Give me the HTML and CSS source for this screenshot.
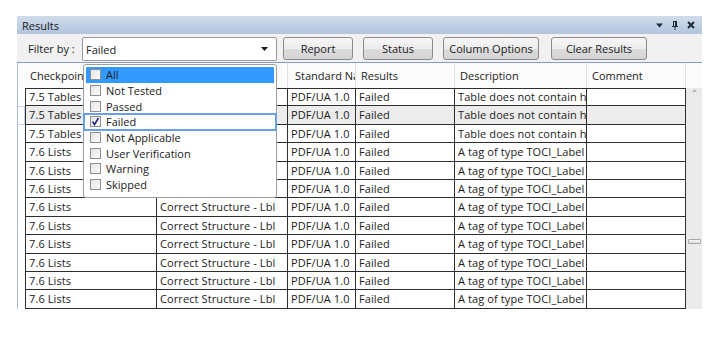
FILE: index.html
```html
<!DOCTYPE html>
<html>
<head>
<meta charset="utf-8">
<link rel="stylesheet" href="styles.css">
</head>
<body>
<div class="panel">
  <div class="titlebar">
    <span class="title">Results</span>
    <div class="title-icons">
      <svg width="7" height="5" viewBox="0 0 7 5"><path d="M0 0.5H7L3.5 4.5Z" fill="#1e2a3a"/></svg>
      <svg width="6" height="9" viewBox="0 0 6 9"><path d="M1 0.5H5M1.5 0.5V5.5M4.5 0.5V5.5M0 5.5H6M3 5.5V9" stroke="#1e2a3a" stroke-width="1" fill="none"/><rect x="3" y="1" width="1.5" height="4.5" fill="#1e2a3a"/></svg>
      <svg width="8" height="8" viewBox="0 0 8 8"><path d="M1 1L7 7M7 1L1 7" stroke="#1e2a3a" stroke-width="2"/></svg>
    </div>
  </div>
  <div class="toolbar">
    <span class="filter-label">Filter by :</span>
    <div class="combo">
      <span>Failed</span>
      <svg width="7" height="4" viewBox="0 0 7 4"><path d="M0 0H7L3.5 4Z" fill="#1b1b1b"/></svg>
    </div>
    <button class="btn btn-report">Report</button>
    <button class="btn btn-status">Status</button>
    <button class="btn btn-columns">Column Options</button>
    <button class="btn btn-clear">Clear Results</button>
  </div>
  <div class="grid">
    <div class="table">
      <div class="row header">
        <div class="rh"></div>
        <div class="hc">Checkpoint</div>
        <div class="hc"></div>
        <div class="hc hc3">Standard Name</div>
        <div class="hc">Results</div>
        <div class="hc">Description</div>
        <div class="hc">Comment</div>
      </div>
      <div class="row first">
        <div class="rh"></div><div class="c c1">7.5 Tables</div><div class="c"></div><div class="c">PDF/UA 1.0</div><div class="c">Failed</div><div class="c">Table does not contain headers</div><div class="c"></div>
      </div>
      <div class="row sel">
        <div class="rh"></div><div class="c c1">7.5 Tables</div><div class="c"></div><div class="c">PDF/UA 1.0</div><div class="c">Failed</div><div class="c">Table does not contain headers</div><div class="c"></div>
      </div>
      <div class="row">
        <div class="rh"></div><div class="c c1">7.5 Tables</div><div class="c"></div><div class="c">PDF/UA 1.0</div><div class="c">Failed</div><div class="c">Table does not contain headers</div><div class="c"></div>
      </div>
      <div class="row">
        <div class="rh"></div><div class="c c1">7.6 Lists</div><div class="c"></div><div class="c">PDF/UA 1.0</div><div class="c">Failed</div><div class="c">A tag of type TOCI_Label</div><div class="c"></div>
      </div>
      <div class="row">
        <div class="rh"></div><div class="c c1">7.6 Lists</div><div class="c"></div><div class="c">PDF/UA 1.0</div><div class="c">Failed</div><div class="c">A tag of type TOCI_Label</div><div class="c"></div>
      </div>
      <div class="row">
        <div class="rh"></div><div class="c c1">7.6 Lists</div><div class="c"></div><div class="c">PDF/UA 1.0</div><div class="c">Failed</div><div class="c">A tag of type TOCI_Label</div><div class="c"></div>
      </div>
      <div class="row">
        <div class="rh"></div><div class="c c1">7.6 Lists</div><div class="c">Correct Structure - Lbl</div><div class="c">PDF/UA 1.0</div><div class="c">Failed</div><div class="c">A tag of type TOCI_Label</div><div class="c"></div>
      </div>
      <div class="row">
        <div class="rh"></div><div class="c c1">7.6 Lists</div><div class="c">Correct Structure - Lbl</div><div class="c">PDF/UA 1.0</div><div class="c">Failed</div><div class="c">A tag of type TOCI_Label</div><div class="c"></div>
      </div>
      <div class="row">
        <div class="rh"></div><div class="c c1">7.6 Lists</div><div class="c">Correct Structure - Lbl</div><div class="c">PDF/UA 1.0</div><div class="c">Failed</div><div class="c">A tag of type TOCI_Label</div><div class="c"></div>
      </div>
      <div class="row">
        <div class="rh"></div><div class="c c1">7.6 Lists</div><div class="c">Correct Structure - Lbl</div><div class="c">PDF/UA 1.0</div><div class="c">Failed</div><div class="c">A tag of type TOCI_Label</div><div class="c"></div>
      </div>
      <div class="row">
        <div class="rh"></div><div class="c c1">7.6 Lists</div><div class="c">Correct Structure - Lbl</div><div class="c">PDF/UA 1.0</div><div class="c">Failed</div><div class="c">A tag of type TOCI_Label</div><div class="c"></div>
      </div>
      <div class="row">
        <div class="rh"></div><div class="c c1">7.6 Lists</div><div class="c">Correct Structure - Lbl</div><div class="c">PDF/UA 1.0</div><div class="c">Failed</div><div class="c">A tag of type TOCI_Label</div><div class="c"></div>
      </div>
    </div>
    <div class="scrollbar">
      <div class="sb-head"></div>
      <svg class="sb-up" width="5" height="3" viewBox="0 0 5 3"><path d="M0 3L2.5 0L5 3Z" fill="#b5b5b5"/></svg>
      <div class="sb-thumb"></div>
    </div>
    <div class="dropdown">
      <div class="item hl"><span class="cb"></span><span>All</span></div>
      <div class="item"><span class="cb"></span><span>Not Tested</span></div>
      <div class="item"><span class="cb"></span><span>Passed</span></div>
      <div class="item focus"><span class="cb"><svg width="9" height="9" viewBox="0 0 9 9"><path d="M1.5 4.5L3.5 7.5L7.5 1" stroke="#262a86" stroke-width="1.6" fill="none"/></svg></span><span>Failed</span></div>
      <div class="item"><span class="cb"></span><span>Not Applicable</span></div>
      <div class="item"><span class="cb"></span><span>User Verification</span></div>
      <div class="item"><span class="cb"></span><span>Warning</span></div>
      <div class="item"><span class="cb"></span><span>Skipped</span></div>
    </div>
  </div>
</div>
</body>
</html>
```
FILE: styles.css
```css
* { box-sizing: border-box; }
body {
  margin: 0;
  background: #ffffff;
  font-family: "Open Sans", "Noto Sans", sans-serif;
  font-size: 11px;
  color: #1b1b1b;
}
.panel {
  margin: 16px 0 0 17px;
  width: 685px;
}
.titlebar {
  height: 18px;
  background: linear-gradient(#d0dcea, #b2c5de);
  display: flex;
  align-items: center;
  justify-content: space-between;
  padding: 0 7px 0 5px;
}
.title { font-size: 11px; }
.title-icons {
  display: flex;
  align-items: center;
  gap: 9px;
}
.toolbar {
  height: 29px;
  background: #f1f1f1;
  border-bottom: 1px solid #7fa0c9;
  display: flex;
  align-items: flex-start;
  padding: 3px 0 0 11px;
}
.filter-label {
  width: 54px;
  line-height: 24px;
}
.combo {
  width: 195px;
  height: 24px;
  background: #ffffff;
  border: 1px solid #9a9a9a;
  border-radius: 2px;
  display: flex;
  align-items: center;
  justify-content: space-between;
  padding: 0 8px 0 3px;
}
.btn {
  height: 23px;
  margin-left: 10px;
  font-family: inherit;
  font-size: 11px;
  color: #1b1b1b;
  background: linear-gradient(#f7f7f7 0%, #ececec 50%, #dcdcdc 52%, #d4d4d4 100%);
  border: 1px solid #8a8a8a;
  border-radius: 3px;
  padding: 0;
}
.btn-report { width: 70px; margin-left: 6px; }
.btn-status { width: 70px; }
.btn-columns { width: 96px; }
.btn-clear { width: 96px; margin-left: 12px; }
.grid {
  position: relative;
  display: flex;
  border-left: 1px solid #a9bfdc;
}
.table { width: 668px; }
.row {
  display: grid;
  grid-template-columns: 7px 132px 131px 68px 99px 132px 99px;
  height: 18.4px;
}
.row.header { height: 25px; background: #fbfbfb; }
.hc {
  padding: 0 5px;
  line-height: 25px;
  white-space: nowrap;
  overflow: hidden;
  border-right: 1px solid #e2e2e2;
}
.hc3 { padding-left: 7px; }
.c {
  padding: 0 3px;
  white-space: nowrap;
  overflow: hidden;
  line-height: 17px;
  letter-spacing: 0.1px;
  border-right: 1px solid #2e2e2e;
  border-bottom: 1px solid #2e2e2e;
}
.c1 { border-left: 1px solid #2e2e2e; }
.row.first .c { border-top: 1px solid #2e2e2e; line-height: 16px; }
.row.sel .c { background: #ececec; }
.row.sel .rh { border: 1px solid #c4d7ee; border-left: none; }
.scrollbar {
  width: 16px;
  background: #ebebeb;
  display: flex;
  flex-direction: column;
  align-items: center;
}
.sb-head {
  height: 25px;
  width: 100%;
  background: #fbfbfb;
}
.sb-up { margin-top: 1px; }
.sb-thumb {
  margin-top: 147px;
  width: 13px;
  height: 5px;
  border: 1px solid #a8a8a8;
  border-radius: 1px;
  background: linear-gradient(#f8f8f8, #dedede);
}
.dropdown {
  position: absolute;
  left: 65px;
  top: 1px;
  width: 194px;
  height: 134px;
  background: #ffffff;
  border: 1px solid #9d9d9d;
  border-radius: 3px;
  padding-top: 2px;
}
.item {
  position: relative;
  height: 15.7px;
  margin: 0 2px;
  padding-left: 4px;
  display: flex;
  align-items: center;
  gap: 5px;
  line-height: 15px;
}
.item.hl { background: #3399ff; }
.item.focus::after {
  content: "";
  position: absolute;
  left: -3px;
  right: -3px;
  top: -1px;
  bottom: -1px;
  border: 2px solid #6b9fe2;
}
.cb {
  width: 11px;
  height: 11px;
  border: 1px solid #8e8e8e;
  background: linear-gradient(135deg, #e4e4e4, #fbfbfb);
  display: flex;
  align-items: center;
  justify-content: center;
}
```
